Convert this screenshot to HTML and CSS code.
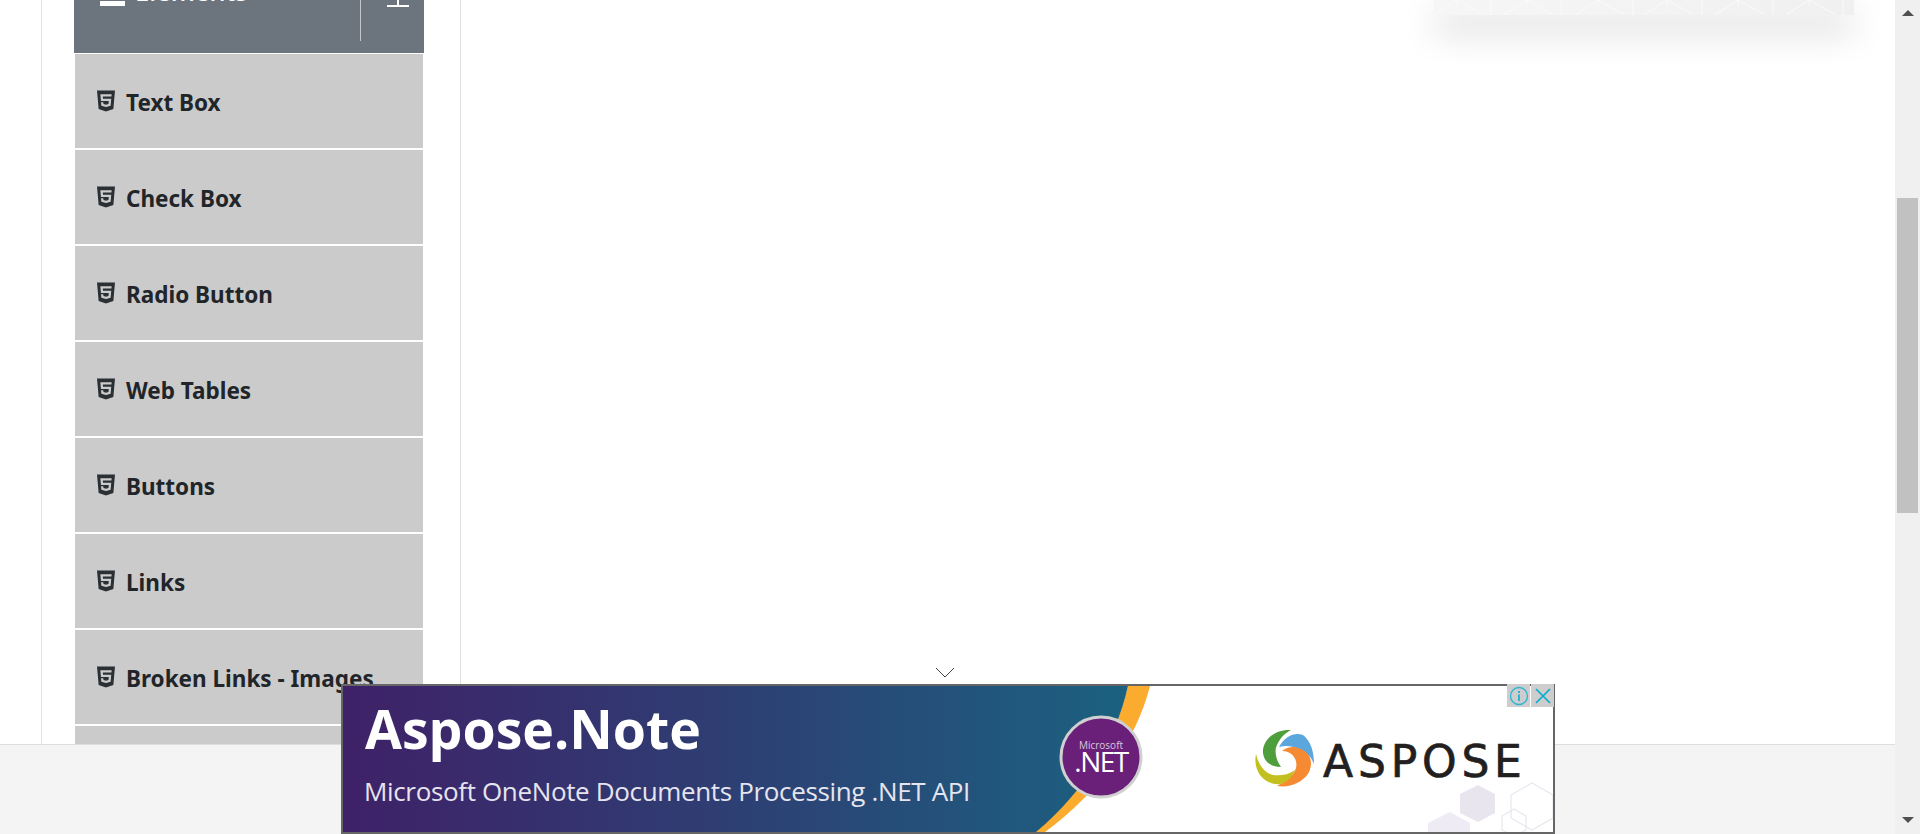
FILE: index.html
```html
<!DOCTYPE html>
<html lang="en">

<head>
    <meta charset="UTF-8">
    <title>Elements</title>
    <link rel="stylesheet" href="styles.css">
</head>

<body>
    <div class="page">
        <div class="page-body">
            <!-- Main content, scrolled down -->
            <main class="main">
                <div class="left-col">
                    <div class="sidebar">
                        <div class="group-header">
                            <div class="group-title">
                                <span class="bars"></span>
                                <span class="group-name">Elements</span>
                            </div>
                            <div class="group-toggle">
                                <span class="plus"></span>
                            </div>
                        </div>

                        <a class="item"><svg class="html5" viewBox="0 0 384 512"><use href="#html5-shape"></use></svg><span>Text Box</span></a>
                        <a class="item"><svg class="html5" viewBox="0 0 384 512"><use href="#html5-shape"></use></svg><span>Check Box</span></a>
                        <a class="item"><svg class="html5" viewBox="0 0 384 512"><use href="#html5-shape"></use></svg><span>Radio Button</span></a>
                        <a class="item"><svg class="html5" viewBox="0 0 384 512"><use href="#html5-shape"></use></svg><span>Web Tables</span></a>
                        <a class="item"><svg class="html5" viewBox="0 0 384 512"><use href="#html5-shape"></use></svg><span>Buttons</span></a>
                        <a class="item"><svg class="html5" viewBox="0 0 384 512"><use href="#html5-shape"></use></svg><span>Links</span></a>
                        <a class="item"><svg class="html5" viewBox="0 0 384 512"><use href="#html5-shape"></use></svg><span>Broken Links - Images</span></a>
                        <a class="item"></a>
                    </div>
                </div>

                <div class="right-col">
                    <!-- Bottom edge of the banner card -->
                    <div class="promo-card">
                        <svg class="promo-pattern" viewBox="1434 0 420 15" preserveAspectRatio="none">
                            <path d="M1434 15L1457 0L1484 15M1504 15L1527 0L1554 15M1575 15L1598 0L1625 15M1644 15L1667 0L1694 15M1715 15L1738 0L1765 15M1786 15L1809 0L1836 15M1457 0V6M1527 0V6M1598 0V6M1667 0V6M1738 0V6M1809 0V6M1491 0V15M1561 0V15M1633 0V15M1702 0V15M1773 0V15M1843 0V15" fill="none" stroke="#fafafa" stroke-width="1"></path>
                        </svg>
                    </div>
                </div>
            </main>

            <footer class="footer"></footer>

            <!-- Advert pinned to the bottom of the window -->
            <div class="ad">
                <svg class="ad-chevron" viewBox="0 0 20 11"><path d="M1 1L10 10L19 1" fill="none" stroke="#444" stroke-width="1"></path></svg>

                <svg class="ad-art" viewBox="343 686 1210 146" preserveAspectRatio="none">
                    <defs>
                        <linearGradient id="ad-gradient" x1="0" x2="1" y1="0" y2="0">
                            <stop offset="0" stop-color="#3f2168"></stop>
                            <stop offset="0.45" stop-color="#2f3c72"></stop>
                            <stop offset="1" stop-color="#1b6180"></stop>
                        </linearGradient>
                    </defs>
                    <path d="M1128 686H1150C1135 745 1095 795 1045 832H1030C1080 790 1115 745 1128 686Z" fill="#fbab2e"></path>
                    <path d="M343 686H1128C1115 745 1080 795 1036 832H343Z" fill="url(#ad-gradient)"></path>

                    <path d="M1478 785L1495 794V813L1478 822L1460 813V794Z" fill="#e8e5ef"></path>
                    <path d="M1450 812L1470 823V834H1428V823Z" fill="#eeebf4"></path>
                    <path d="M1532 783L1553 795V818L1532 830L1511 818V795Z" fill="none" stroke="#e9e6f0" stroke-width="1.2"></path>
                    <path d="M1514 809L1526 816V830L1514 836L1502 830V816Z" fill="none" stroke="#e9e6f0" stroke-width="1.2"></path>

                    <circle cx="1101" cy="757" r="40" fill="#6a2079" stroke="#d0d0d0" stroke-width="3"></circle>

                    <path d="M1291 730C1275 729 1262 740 1263 753C1264 762 1271 767 1281 767C1276 760 1274 751 1277 745C1280 738 1285 733 1291 730Z" fill="#4f9e3c"></path>
                    <path d="M1279 747C1285 736 1295 732 1303 735C1311 741 1314 752 1314 764C1311 756 1305 751 1299 749C1292 746 1286 745 1279 747Z" fill="#5ba6dc"></path>
                    <path d="M1282 751C1287 747 1293 746 1298 748C1305 750 1311 755 1311 763C1311 773 1305 779 1297 783C1291 786 1285 787 1277 786C1286 781 1294 776 1296 768C1298 759 1292 751 1282 751Z" fill="#f58a32"></path>
                    <path d="M1256 754C1253 768 1261 782 1275 784C1284 785 1291 780 1295 770C1288 775 1280 776 1273 775C1265 773 1259 766 1256 754Z" fill="#c3bf1f"></path>
                </svg>

                <div class="ad-copy">
                    <div class="ad-title">Aspose.Note</div>
                    <div class="ad-sub">Microsoft OneNote Documents Processing .NET API</div>
                </div>

                <div class="ad-badge">
                    <div class="ad-badge-small">Microsoft</div>
                    <div class="ad-badge-big">.NET</div>
                </div>

                <div class="ad-brand">ASPOSE</div>

                <div class="ad-controls">
                    <span class="ad-control">
                        <svg viewBox="0 0 20 20"><circle cx="10" cy="10" r="8.5" fill="none" stroke="#2bb5d3" stroke-width="1.3"></circle><path d="M10 5V7M10 8.5V15" stroke="#2bb5d3" stroke-width="2" fill="none"></path></svg>
                    </span>
                    <span class="ad-control">
                        <svg viewBox="0 0 20 20"><path d="M3 3L17 17M17 3L3 17" stroke="#00aecd" stroke-width="1.6" fill="none"></path></svg>
                    </span>
                </div>
            </div>
        </div>

        <!-- Window scrollbar -->
        <div class="scrollbar">
            <span class="arrow-up"></span>
            <span class="thumb"></span>
            <span class="arrow-down"></span>
        </div>
    </div>

    <!-- Shared icon shape -->
    <svg class="icon-defs">
        <symbol id="html5-shape" viewBox="0 0 384 512">
            <path d="M0 32l34.9 395.8L191.5 480l157.6-52.2L384 32H0zm308.2 127.9H124.4l4.1 49.4h175.6l-13.6 148.4-97.9 27v.3h-1.1l-98.7-27.3-6-75.8h47.7L138 320l53.5 14.5 53.7-14.5 6-62.2H84.3L71.5 112.2h241.1l-4.4 47.7z"></path>
        </symbol>
    </svg>
</body>

</html>
```

FILE: styles.css
```css
/* Set the style of the entire page */
html,
body {
    margin: 0;
    height: 100%;
    overflow: hidden;
    background-color: #ffffff;
    font-family: "Noto Sans", "Open Sans", sans-serif;
}

.page {
    display: flex;
    height: 834px;
}

.page-body {
    position: relative;
    flex: 1;
    display: flex;
    flex-direction: column;
    min-width: 0;
}

/* Main area */
.main {
    display: flex;
    height: 745px;
    box-sizing: border-box;
    border-bottom: 1px solid #dedede;
    overflow: hidden;
}

.left-col {
    box-sizing: border-box;
    width: 420px;
    margin-left: 41px;
    padding: 0 36px 0 32px;
    border-left: 1px solid #dee2e6;
    border-right: 1px solid #dee2e6;
}

.right-col {
    flex: 1;
    display: flex;
    justify-content: flex-end;
    align-items: flex-start;
    padding-right: 41px;
}

/* Sidebar */
.sidebar {
    width: 350px;
}

.group-header {
    display: flex;
    justify-content: space-between;
    height: 53px;
    background-color: #6c757d;
    color: #ffffff;
}

.group-title {
    display: flex;
    align-items: flex-start;
    gap: 10px;
    padding-left: 26px;
}

.bars {
    width: 25px;
    height: 5px;
    margin-top: 1px;
    background-color: #ffffff;
}

.group-name {
    margin-top: -29px;
    font-size: 25.5px;
    line-height: 40px;
    font-weight: 500;
}

.group-toggle {
    box-sizing: border-box;
    width: 64px;
    height: 41px;
    border-left: 1px solid #c4c8cc;
    padding-left: 26px;
}

.plus {
    display: block;
    position: relative;
    width: 22px;
    height: 2px;
    margin-top: 5px;
    background-color: #ffffff;
}

.plus::before {
    content: "";
    position: absolute;
    left: 10px;
    bottom: 2px;
    width: 2px;
    height: 6px;
    background-color: #ffffff;
}

.item {
    display: flex;
    align-items: center;
    gap: 11px;
    box-sizing: border-box;
    height: 94px;
    margin: 1px 1px 2px;
    padding-left: 22px;
    background-color: #cbcbcb;
    color: #212529;
    font-size: 22.5px;
    font-weight: 700;
}

.item span {
    padding-top: 2px;
}

.html5 {
    width: 18px;
    height: 24px;
    fill: #2b3035;
    flex: none;
}

.icon-defs {
    display: none;
}

/* Banner card */
.promo-card {
    width: 420px;
    height: 15px;
    background: linear-gradient(90deg, #f6f6f6, #f0f0f0);
    box-shadow: 0 15px 36px rgba(0, 0, 0, 0.2);
}

.promo-pattern {
    display: block;
    width: 100%;
    height: 100%;
}

/* Footer */
.footer {
    flex: 1;
    background-color: #f4f4f4;
}

/* Advert */
.ad {
    position: absolute;
    left: 341px;
    bottom: 0;
    box-sizing: border-box;
    width: 1214px;
    height: 150px;
    border: 2px solid #666666;
    background-color: #ffffff;
}

.ad-chevron {
    position: absolute;
    left: 592px;
    top: -19px;
    width: 20px;
    height: 11px;
}

.ad-art {
    position: absolute;
    left: 0;
    top: 0;
    width: 100%;
    height: 100%;
}

.ad-copy {
    position: absolute;
    left: 22px;
    top: 8px;
    color: #ffffff;
    font-family: "Open Sans", sans-serif;
    white-space: nowrap;
}

.ad-title {
    font-size: 53.6px;
    line-height: 70px;
    font-weight: 700;
}

.ad-sub {
    margin: 9px 0 0 -1px;
    font-size: 26px;
    line-height: 36px;
    letter-spacing: -0.35px;
    color: #e6e4ee;
}

.ad-badge {
    position: absolute;
    left: 717px;
    top: 52px;
    width: 82px;
    color: #ffffff;
    text-align: center;
    font-family: "Open Sans", sans-serif;
}

.ad-badge-small {
    font-size: 10px;
    line-height: 14px;
    color: #d9c8df;
}

.ad-badge-big {
    font-size: 28px;
    line-height: 18px;
    letter-spacing: -1.5px;
}

.ad-brand {
    position: absolute;
    left: 980px;
    top: 49px;
    color: #231f20;
    font-family: "DejaVu Sans", sans-serif;
    font-size: 44px;
    line-height: 54px;
    letter-spacing: 4.8px;
    -webkit-text-stroke: 0.7px #231f20;
}

.ad-controls {
    position: absolute;
    right: -1px;
    top: -2px;
    display: flex;
    gap: 1px;
}

.ad-control {
    display: flex;
    align-items: center;
    justify-content: center;
    width: 23px;
    height: 23px;
    background-color: #cdcdcd;
}

.ad-control svg {
    width: 20px;
    height: 20px;
}

/* Scrollbar */
.scrollbar {
    position: relative;
    flex: none;
    display: flex;
    flex-direction: column;
    align-items: center;
    width: 25px;
    background-color: #f0f0f0;
}

.arrow-up {
    width: 0;
    height: 0;
    margin-top: 10px;
    border-left: 6px solid transparent;
    border-right: 6px solid transparent;
    border-bottom: 6px solid #505050;
}

.thumb {
    width: 21px;
    height: 315px;
    margin-top: 182px;
    background-color: #c1c1c1;
}

.arrow-down {
    width: 0;
    height: 0;
    margin-top: 304px;
    border-left: 6px solid transparent;
    border-right: 6px solid transparent;
    border-top: 6px solid #505050;
}
```
